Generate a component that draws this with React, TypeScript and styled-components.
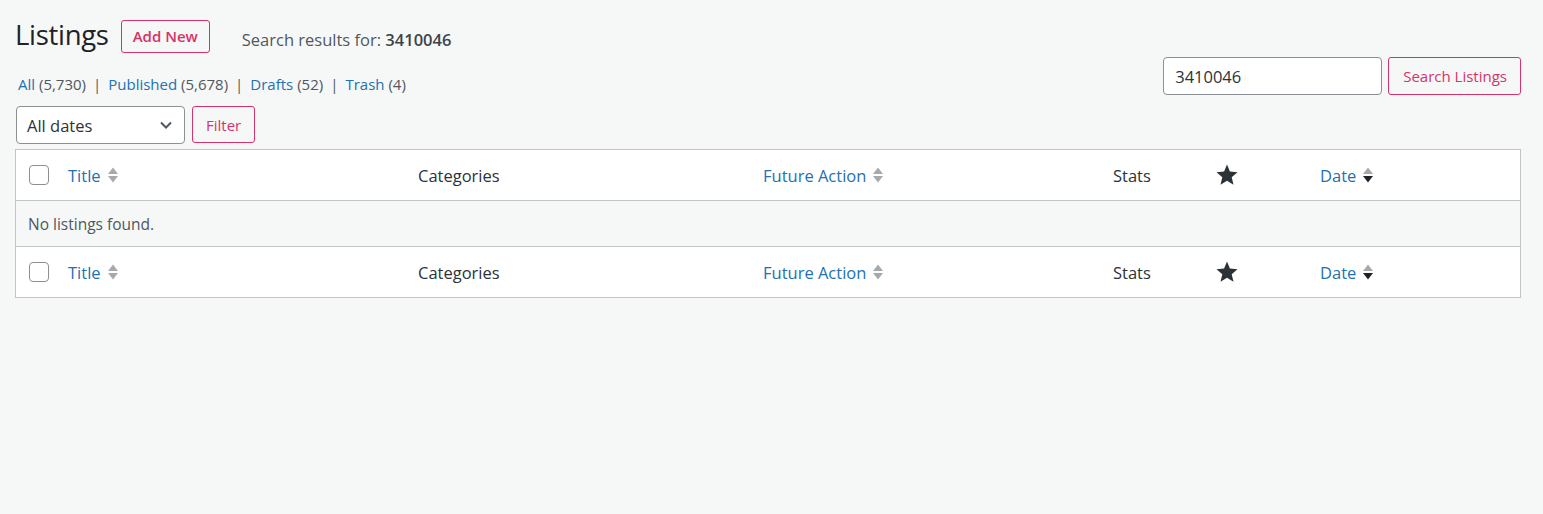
import styled, { createGlobalStyle } from "styled-components";

const GlobalStyle = createGlobalStyle`
  html, body {
    margin: 0;
    padding: 0;
    background: #f6f7f7;
  }
  body {
    font-family: "Open Sans", "Noto Sans", sans-serif;
    color: #3c434a;
  }
`;

const Page = styled.div`
  padding: 16px 22px 0 15px;
  box-sizing: border-box;
  width: 1543px;
`;

const HeadRow = styled.div`
  display: flex;
  align-items: center;
  height: 38px;
`;

const Heading = styled.h1`
  margin: 0;
  font-size: 27.5px;
  font-weight: 400;
  color: #1d2327;
  line-height: 38px;
  letter-spacing: -0.3px;
`;

const PinkButton = styled.button<{ $bold?: boolean; $h?: number }>`
  box-sizing: border-box;
  height: ${(p) => p.$h ?? 37}px;
  padding: 0 13px;
  background: #f6f7f7;
  border: 1px solid #d63369;
  border-radius: 3px;
  color: #d63369;
  font-family: inherit;
  font-size: 15px;
  font-weight: ${(p) => (p.$bold ? 600 : 400)};
  cursor: pointer;
`;

const AddNew = styled(PinkButton)`
  margin-left: 12px;
  margin-top: 2px;
  padding: 0 11px;
`;

const SearchNote = styled.span`
  margin-left: 32px;
  margin-top: 8px;
  font-size: 16.5px;
  color: #50575e;
  b {
    font-weight: 600;
    color: #3c434a;
  }
`;

const Bar = styled.div`
  display: flex;
  justify-content: space-between;
  align-items: flex-start;
  margin-top: 3px;
`;

const LeftCol = styled.div`
  display: flex;
  flex-direction: column;
`;

const Subsub = styled.ul`
  list-style: none;
  margin: 16px 0 0 3px;
  padding: 0;
  display: flex;
  font-size: 15px;
  line-height: 22px;
  color: #50575e;
  li + li::before {
    content: "|";
    margin: 0 7px;
    color: #50575e;
  }
  a {
    color: #2271b1;
    text-decoration: none;
  }
`;

const FilterRow = styled.div`
  display: flex;
  gap: 7px;
  margin-top: 11px;
  margin-left: 1px;
`;

const Select = styled.div`
  box-sizing: border-box;
  width: 169px;
  height: 38px;
  border: 1px solid #8c8f94;
  border-radius: 4px;
  background: #fff;
  display: flex;
  align-items: center;
  justify-content: space-between;
  padding: 0 10px 0 10px;
  font-size: 16.5px;
  color: #2c3338;
`;

const SearchBox = styled.div`
  display: flex;
  gap: 6px;
`;

const Input = styled.input`
  box-sizing: border-box;
  width: 219px;
  height: 38px;
  border: 1px solid #8c8f94;
  border-radius: 4px;
  background: #fff;
  padding: 0 11px;
  font-family: inherit;
  font-size: 16.5px;
  color: #2c3338;
  outline: none;
`;

const SearchButton = styled(PinkButton)`
  padding: 0 13px 0 14px;
  height: 38px;
`;

const Table = styled.div`
  margin-top: 5px;
  border: 1px solid #c3c4c7;
  background: #fff;
  box-shadow: 0 1px 1px rgba(0, 0, 0, 0.04);
`;

const Row = styled.div<{ $empty?: boolean; $top?: boolean }>`
  display: grid;
  grid-template-columns: 42px 350px 345px 350px 102px 105px 1fr;
  align-items: center;
  height: ${(p) => (p.$empty ? 45 : 50)}px;
  background: ${(p) => (p.$empty ? "#f6f7f7" : "#fff")};
  border-top: ${(p) => (p.$top ? "none" : "1px solid #c3c4c7")};
  font-size: 16.5px;
  color: #2c3338;
`;

const EmptyCell = styled.div`
  grid-column: 1 / -1;
  padding-left: 12px;
  font-size: 15.5px;
  color: #50575e;
`;

const Cell = styled.div`
  padding-left: 10px;
  display: flex;
  align-items: center;
`;

const CbCell = styled.div`
  padding-left: 13px;
  display: flex;
  align-items: center;
`;

const Checkbox = styled.span`
  box-sizing: border-box;
  width: 20px;
  height: 20px;
  border: 1px solid #8c8f94;
  border-radius: 4px;
  background: #fff;
  display: inline-block;
`;

const SortLink = styled.a`
  color: #2271b1;
  text-decoration: none;
  display: inline-flex;
  align-items: center;
  gap: 6px;
`;

const ChevronDown = () => (
  <svg width="16" height="16" viewBox="0 0 16 16">
    <path d="M3 5.5 L8 10.5 L13 5.5" fill="none" stroke="#50575e" strokeWidth="2" />
  </svg>
);

const SortIcon = ({ active }: { active?: boolean }) => (
  <svg width="12" height="20" viewBox="0 0 12 20">
    <path d="M1 9 L6 2.5 L11 9 Z" fill="#a7aaad" />
    <path d="M1 11 L6 17.5 L11 11 Z" fill={active ? "#1d2327" : "#a7aaad"} />
  </svg>
);

const Star = () => (
  <svg width="24" height="24" viewBox="0 0 24 24">
    <path
      d="M12 1.5 L14.9 8.6 L22.5 9.2 L16.7 14.2 L18.5 21.7 L12 17.7 L5.5 21.7 L7.3 14.2 L1.5 9.2 L9.1 8.6 Z"
      fill="#2c3338"
    />
  </svg>
);

const HeaderCells = () => (
  <>
    <CbCell>
      <Checkbox />
    </CbCell>
    <Cell>
      <SortLink href="#">
        Title <SortIcon />
      </SortLink>
    </Cell>
    <Cell>Categories</Cell>
    <Cell>
      <SortLink href="#">
        Future Action <SortIcon />
      </SortLink>
    </Cell>
    <Cell>Stats</Cell>
    <Cell>
      <Star />
    </Cell>
    <Cell>
      <SortLink href="#">
        Date <SortIcon active />
      </SortLink>
    </Cell>
  </>
);

export default function App() {
  return (
    <>
      <GlobalStyle />
      <Page>
        <HeadRow>
          <Heading>Listings</Heading>
          <AddNew $bold $h={33}>
            Add New
          </AddNew>
          <SearchNote>
            Search results for: <b>3410046</b>
          </SearchNote>
        </HeadRow>
        <Bar>
          <LeftCol>
            <Subsub>
              <li>
                <a href="#">All</a> (5,730)
              </li>
              <li>
                <a href="#">Published</a> (5,678)
              </li>
              <li>
                <a href="#">Drafts</a> (52)
              </li>
              <li>
                <a href="#">Trash</a> (4)
              </li>
            </Subsub>
            <FilterRow>
              <Select>
                All dates
                <ChevronDown />
              </Select>
              <PinkButton>Filter</PinkButton>
            </FilterRow>
          </LeftCol>
          <SearchBox>
            <Input defaultValue="3410046" />
            <SearchButton>Search Listings</SearchButton>
          </SearchBox>
        </Bar>
        <Table>
          <Row $top>
            <HeaderCells />
          </Row>
          <Row $empty>
            <EmptyCell>No listings found.</EmptyCell>
          </Row>
          <Row>
            <HeaderCells />
          </Row>
        </Table>
      </Page>
    </>
  );
}
